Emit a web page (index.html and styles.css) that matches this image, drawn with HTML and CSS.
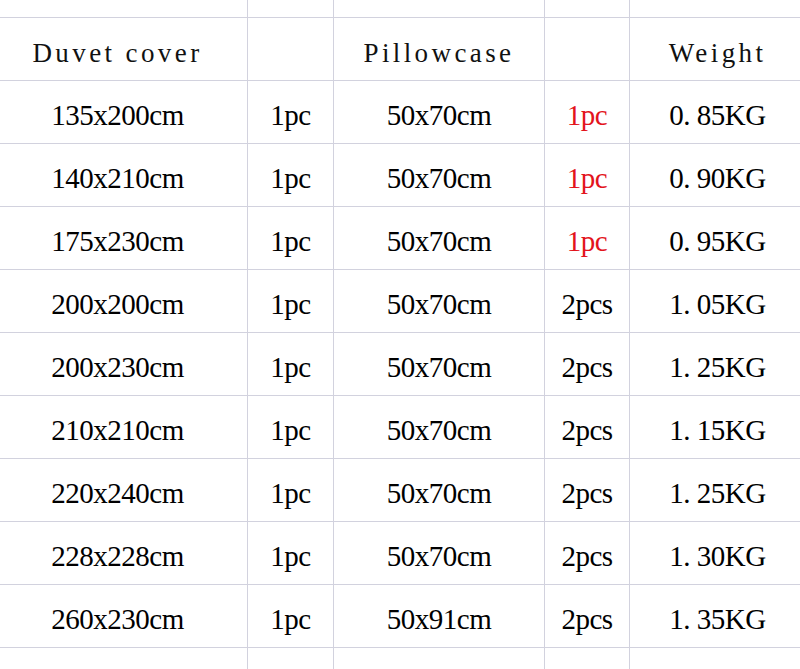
FILE: index.html
```html
<!DOCTYPE html>
<html>
<head>
<meta charset="utf-8">
<link rel="stylesheet" href="styles.css">
</head>
<body>
<div class="sheet">
  <div class="c"></div><div class="c"></div><div class="c"></div><div class="c"></div><div class="c"></div>

  <div class="c h">Duvet cover</div><div class="c h"></div><div class="c h">Pillowcase</div><div class="c h"></div><div class="c h">Weight</div>

  <div class="c">135x200cm</div><div class="c">1pc</div><div class="c">50x70cm</div><div class="c red">1pc</div><div class="c">0. 85KG</div>
  <div class="c">140x210cm</div><div class="c">1pc</div><div class="c">50x70cm</div><div class="c red">1pc</div><div class="c">0. 90KG</div>
  <div class="c">175x230cm</div><div class="c">1pc</div><div class="c">50x70cm</div><div class="c red">1pc</div><div class="c">0. 95KG</div>
  <div class="c">200x200cm</div><div class="c">1pc</div><div class="c">50x70cm</div><div class="c">2pcs</div><div class="c">1. 05KG</div>
  <div class="c">200x230cm</div><div class="c">1pc</div><div class="c">50x70cm</div><div class="c">2pcs</div><div class="c">1. 25KG</div>
  <div class="c">210x210cm</div><div class="c">1pc</div><div class="c">50x70cm</div><div class="c">2pcs</div><div class="c">1. 15KG</div>
  <div class="c">220x240cm</div><div class="c">1pc</div><div class="c">50x70cm</div><div class="c">2pcs</div><div class="c">1. 25KG</div>
  <div class="c">228x228cm</div><div class="c">1pc</div><div class="c">50x70cm</div><div class="c">2pcs</div><div class="c">1. 30KG</div>
  <div class="c">260x230cm</div><div class="c">1pc</div><div class="c">50x91cm</div><div class="c">2pcs</div><div class="c">1. 35KG</div>

  <div class="c"></div><div class="c"></div><div class="c"></div><div class="c"></div><div class="c"></div>
</div>
</body>
</html>
```
FILE: styles.css
```css
html, body {
  margin: 0;
  padding: 0;
  background: #ffffff;
  overflow: hidden;
  width: 800px;
  height: 669px;
}
.sheet {
  display: grid;
  grid-template-columns: 259px 85px 210px 84px 175px;
  grid-template-rows: repeat(11, 62px) 21px;
  gap: 1px;
  background: #d2d2de;
  margin: -45px 0 0 -12px;
  width: 817px;
}
.c {
  background: #ffffff;
  display: flex;
  align-items: center;
  justify-content: center;
  padding-top: 7px;
  box-sizing: border-box;
  font-family: "Liberation Serif", "Times New Roman", serif;
  font-size: 29px;
  letter-spacing: -0.5px;
  color: #000000;
  white-space: nowrap;
}
.h {
  font-size: 27px;
  letter-spacing: 3.4px;
  padding-top: 9px;
  color: #111111;
}
.red {
  color: #e3141c;
}
```
